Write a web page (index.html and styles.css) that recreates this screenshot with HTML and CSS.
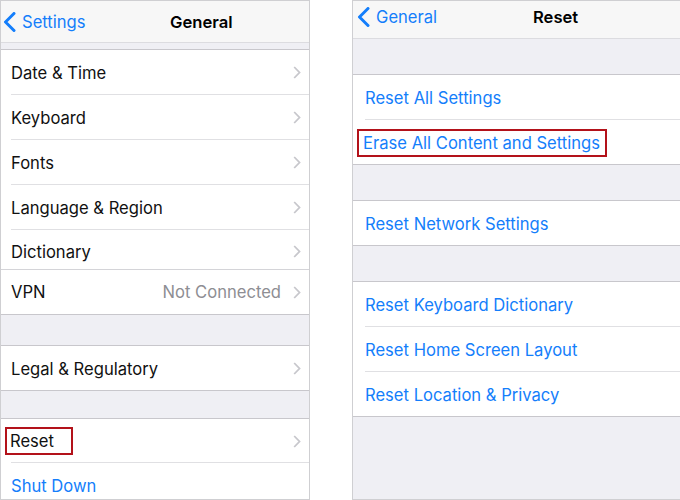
FILE: index.html
```html
<!DOCTYPE html>
<html>
<head>
<meta charset="utf-8">
<link rel="stylesheet" href="styles.css">
</head>
<body>
<div class="screen">
  <div class="panel panel-left">
    <div class="nav nav-left">
      <div class="back back-left">
        <svg class="back-chev" width="13" height="20" viewBox="0 0 13 20"><path d="M11 1.5 L2.5 10 L11 18.5" fill="none" stroke="#147efb" stroke-width="3" stroke-linecap="round" stroke-linejoin="round"/></svg>
        <span class="back-text">Settings</span>
      </div>
      <div class="title">General</div>
    </div>
    <div class="spacer sp-6"></div>
    <div class="group">
      <div class="row"><span class="label">Date &amp; Time</span><span class="chev"><svg width="8" height="13" viewBox="0 0 8 13"><path d="M1.2 1 L6.5 6.5 L1.2 12" fill="none" stroke="#c7c7cc" stroke-width="1.8"/></svg></span></div>
      <div class="row"><span class="label">Keyboard</span><span class="chev"><svg width="8" height="13" viewBox="0 0 8 13"><path d="M1.2 1 L6.5 6.5 L1.2 12" fill="none" stroke="#c7c7cc" stroke-width="1.8"/></svg></span></div>
      <div class="row"><span class="label">Fonts</span><span class="chev"><svg width="8" height="13" viewBox="0 0 8 13"><path d="M1.2 1 L6.5 6.5 L1.2 12" fill="none" stroke="#c7c7cc" stroke-width="1.8"/></svg></span></div>
      <div class="row"><span class="label">Language &amp; Region</span><span class="chev"><svg width="8" height="13" viewBox="0 0 8 13"><path d="M1.2 1 L6.5 6.5 L1.2 12" fill="none" stroke="#c7c7cc" stroke-width="1.8"/></svg></span></div>
      <div class="row row-full row-short"><span class="label">Dictionary</span><span class="chev"><svg width="8" height="13" viewBox="0 0 8 13"><path d="M1.2 1 L6.5 6.5 L1.2 12" fill="none" stroke="#c7c7cc" stroke-width="1.8"/></svg></span></div>
      <div class="row row-last row-full row-vpn"><span class="label">VPN</span><span class="detail">Not Connected</span><span class="chev"><svg width="8" height="13" viewBox="0 0 8 13"><path d="M1.2 1 L6.5 6.5 L1.2 12" fill="none" stroke="#c7c7cc" stroke-width="1.8"/></svg></span></div>
    </div>
    <div class="spacer sp-30"></div>
    <div class="group">
      <div class="row row-last"><span class="label">Legal &amp; Regulatory</span><span class="chev"><svg width="8" height="13" viewBox="0 0 8 13"><path d="M1.2 1 L6.5 6.5 L1.2 12" fill="none" stroke="#c7c7cc" stroke-width="1.8"/></svg></span></div>
    </div>
    <div class="spacer sp-27"></div>
    <div class="group group-open">
      <div class="row row-reset"><span class="label hl hl-left">Reset</span><span class="chev"><svg width="8" height="13" viewBox="0 0 8 13"><path d="M1.2 1 L6.5 6.5 L1.2 12" fill="none" stroke="#c7c7cc" stroke-width="1.8"/></svg></span></div>
      <div class="row row-last row-shut"><span class="label blue">Shut Down</span></div>
    </div>
  </div>

  <div class="panel panel-right">
    <div class="nav nav-right">
      <div class="back back-right">
        <svg class="back-chev" width="13" height="20" viewBox="0 0 13 20"><path d="M11 1.5 L2.5 10 L11 18.5" fill="none" stroke="#147efb" stroke-width="3" stroke-linecap="round" stroke-linejoin="round"/></svg>
        <span class="back-text">General</span>
      </div>
      <div class="title">Reset</div>
    </div>
    <div class="spacer sp-35"></div>
    <div class="group">
      <div class="row rrow"><span class="label blue">Reset All Settings</span></div>
      <div class="row rrow row-last"><span class="label blue hl hl-right">Erase All Content and Settings</span></div>
    </div>
    <div class="spacer sp-35"></div>
    <div class="group">
      <div class="row rrow row-last"><span class="label blue">Reset Network Settings</span></div>
    </div>
    <div class="spacer sp-35"></div>
    <div class="group">
      <div class="row rrow"><span class="label blue">Reset Keyboard Dictionary</span></div>
      <div class="row rrow"><span class="label blue">Reset Home Screen Layout</span></div>
      <div class="row rrow row-last"><span class="label blue">Reset Location &amp; Privacy</span></div>
    </div>
  </div>
</div>
</body>
</html>
```

FILE: styles.css
```css
html, body {
  margin: 0;
  padding: 0;
  background: #ffffff;
}

body {
  font-family: "Inter", "Noto Sans", sans-serif;
  font-size: 16.6px;
  color: #111111;
  -webkit-font-smoothing: antialiased;
}

.screen {
  display: flex;
  gap: 42px;
  width: 680px;
  height: 500px;
}

.panel {
  box-sizing: border-box;
  height: 500px;
  border: 1px solid #cfcfd2;
  background: #efeff4;
  display: flex;
  flex-direction: column;
  overflow: hidden;
}

.panel-left {
  width: 310px;
}

.panel-right {
  width: 328px;
  border-right: none;
}

.nav {
  background: #f7f7f7;
  border-bottom: 1px solid #dcdce0;
  display: flex;
  align-items: center;
  flex-shrink: 0;
}

.nav-left {
  height: 41px;
}

.nav-right {
  box-sizing: content-box;
  height: 32px;
  padding-bottom: 5px;
}

.back {
  display: flex;
  align-items: center;
  color: #147efb;
  flex-shrink: 0;
}

.back-left {
  width: 169px;
  padding-left: 2px;
  box-sizing: border-box;
}

.back-right {
  width: 180px;
  padding-left: 4px;
  box-sizing: border-box;
}

.back-chev {
  display: block;
  flex-shrink: 0;
}

.back-text {
  margin-left: 6px;
}

.title {
  font-weight: 600;
  color: #000000;
}

.spacer {
  flex-shrink: 0;
}

.sp-6 { height: 6px; }
.sp-27 { height: 27px; }
.sp-30 { height: 30px; }
.sp-35 { height: 35px; }

.group {
  background: #ffffff;
  border-top: 1px solid #c8c7cc;
  border-bottom: 1px solid #c8c7cc;
  flex-shrink: 0;
}

.group-open {
  border-bottom: none;
  flex-grow: 1;
}

.row {
  display: flex;
  align-items: center;
  height: 43px;
  padding-top: 1px;
  margin-left: 10px;
  padding-right: 7px;
  border-bottom: 1px solid #e0e0e3;
}

.row-short {
  height: 35px;
  padding-top: 4px;
}

.row-vpn {
  height: 44px;
  padding-top: 0;
}

.row-full {
  margin-left: 0;
  padding-left: 10px;
  border-bottom-color: #d4d4d8;
}

.row-last {
  border-bottom: none;
}

.row-reset {
  height: 42px;
}

.row-shut {
  height: 42px;
  padding-top: 2px;
}

.rrow {
  margin-left: 12px;
}

.label {
  flex-grow: 1;
  white-space: nowrap;
}

.blue {
  color: #147efb;
}

.detail {
  color: #8e8e93;
  margin-right: 12px;
}

.chev {
  display: flex;
  align-items: center;
  width: 9px;
}

.chev svg {
  display: block;
}

.hl {
  flex-grow: 0;
  margin-right: auto;
  border: 2px solid #b3121a;
  line-height: 24px;
}

.hl-left {
  margin-left: -6px;
  padding: 0 17px 0 3px;
}

.hl-right {
  margin-left: -8px;
  padding: 0 5px 0 4px;
}
```
